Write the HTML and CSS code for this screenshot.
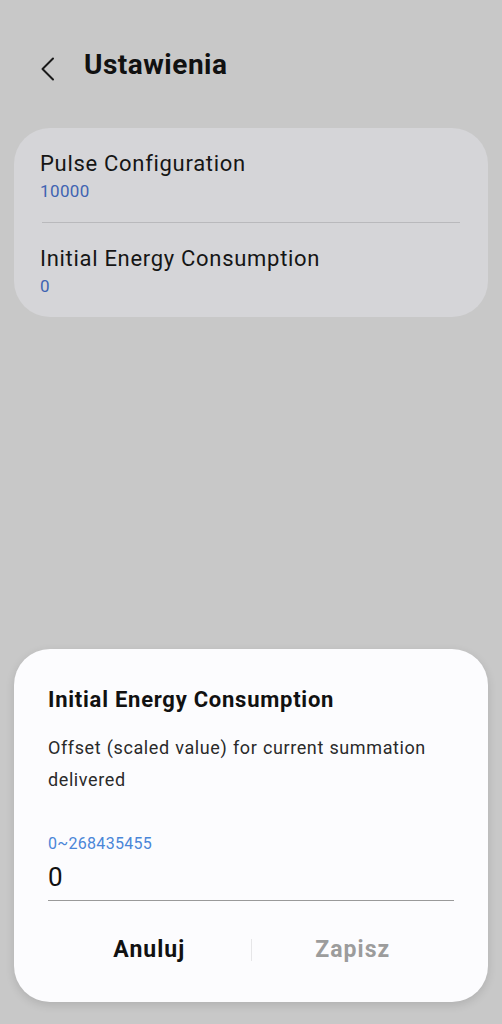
FILE: index.html
```html
<!DOCTYPE html>
<html lang="pl">
<head>
<meta charset="utf-8">
<title>Ustawienia</title>
<link rel="stylesheet" href="styles.css">
</head>
<body>
<div class="screen">
  <header class="header">
    <svg class="back" width="16" height="24" viewBox="0 0 16 24" aria-hidden="true">
      <path d="M13 1.5 L2.5 12 L13 22.5" fill="none" stroke="#1a1a1a" stroke-width="2" stroke-linecap="round" stroke-linejoin="round"/>
    </svg>
    <h1 class="title">Ustawienia</h1>
  </header>

  <section class="card">
    <div class="item">
      <div class="item-title">Pulse Configuration</div>
      <div class="item-value">10000</div>
    </div>
    <div class="divider"></div>
    <div class="item">
      <div class="item-title">Initial Energy Consumption</div>
      <div class="item-value">0</div>
    </div>
  </section>

  <div class="dialog">
    <div class="dialog-title">Initial Energy Consumption</div>
    <div class="dialog-desc">Offset (scaled value) for current summation delivered</div>
    <div class="range">0~268435455</div>
    <div class="input">0</div>
    <div class="actions">
      <div class="btn btn-cancel">Anuluj</div>
      <div class="sep"></div>
      <div class="btn btn-save">Zapisz</div>
    </div>
  </div>
</div>
</body>
</html>
```
FILE: styles.css
```css
html, body {
  margin: 0;
  padding: 0;
  background: #c8c8c8;
}
body {
  font-family: Roboto, "Liberation Sans", sans-serif;
  color: #111;
}
.screen {
  height: 1024px;
  display: flex;
  flex-direction: column;
  box-sizing: border-box;
}
.header {
  display: flex;
  align-items: flex-start;
  padding: 48px 0 0 40px;
}
.back {
  margin-top: 9px;
  margin-right: 28px;
}
.title {
  margin: 0;
  font-size: 28px;
  line-height: 34px;
  font-weight: 700;
  letter-spacing: 0.5px;
  color: #111;
}
.card {
  margin: 46px 14px 0;
  background: #d5d5d8;
  border-radius: 36px;
  padding: 0 28px 0 26px;
}
.item {
  padding: 22px 0 20px;
}
.item-title {
  font-size: 22px;
  line-height: 28px;
  letter-spacing: 0.7px;
  color: #151515;
}
.item-value {
  margin-top: 2px;
  font-size: 17px;
  line-height: 22px;
  letter-spacing: 0.4px;
  color: #4063b2;
}
.divider {
  height: 1px;
  background: #b9b9bc;
  margin-left: 2px;
}
.dialog {
  margin: auto 14px 22px;
  background: #fcfcfe;
  border-radius: 36px;
  padding: 37px 34px 38px;
  box-shadow: 0 3px 10px rgba(0, 0, 0, 0.12);
}
.dialog-title {
  font-size: 22px;
  line-height: 28px;
  font-weight: 700;
  letter-spacing: 0.75px;
  color: #111;
}
.dialog-desc {
  margin-top: 18px;
  font-size: 18px;
  line-height: 32px;
  letter-spacing: 0.6px;
  word-spacing: 0.5px;
  color: #2a2a2a;
}
.range {
  margin-top: 38px;
  font-size: 16px;
  line-height: 20px;
  letter-spacing: 0.3px;
  color: #4a86d8;
}
.input {
  margin-top: 7px;
  font-size: 26px;
  line-height: 32px;
  color: #111;
  padding-bottom: 7px;
  border-bottom: 1.5px solid #9a9a9a;
}
.actions {
  margin-top: 35px;
  display: flex;
  align-items: center;
}
.btn {
  flex: 1;
  text-align: center;
  font-size: 23px;
  line-height: 28px;
  font-weight: 700;
  letter-spacing: 1px;
}
.btn-cancel {
  color: #111;
}
.btn-save {
  color: #9c9c9c;
}
.sep {
  width: 1px;
  height: 22px;
  background: #e6e6e8;
}
```
